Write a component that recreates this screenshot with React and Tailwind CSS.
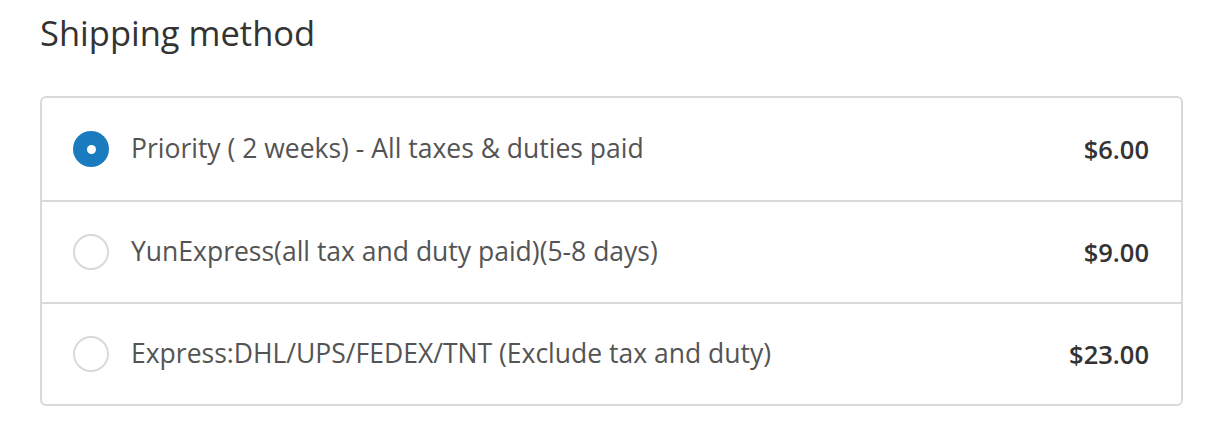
export default function App() {
  const options = [
    { label: 'Priority ( 2 weeks) - All taxes & duties paid', price: '$6.00', checked: true },
    { label: 'YunExpress(all tax and duty paid)(5-8 days)', price: '$9.00', checked: false },
    { label: 'Express:DHL/UPS/FEDEX/TNT (Exclude tax and duty)', price: '$23.00', checked: false },
  ];

  return (
    <div className="min-h-screen bg-white px-[40px] pt-[10px]" style={{ fontFamily: '"Open Sans", "Noto Sans", sans-serif' }}>
      <h2 className="text-[34.5px] leading-[46px] text-[#333333]">Shipping method</h2>
      <div className="mt-[40px] w-[1143px] rounded-[6px] border-2 border-[#d9d9d9]">
        {options.map((o, i) => (
          <div
            key={i}
            className={
              'flex h-[102px] items-center pl-[31px] pr-[32px] ' + (i > 0 ? 'border-t-2 border-[#d9d9d9]' : '')
            }
          >
            {o.checked ? (
              <span className="flex h-[36px] w-[36px] shrink-0 items-center justify-center rounded-full bg-[#1a7bbf]">
                <span className="h-[9px] w-[9px] rounded-full bg-white" />
              </span>
            ) : (
              <span className="h-[36px] w-[36px] shrink-0 rounded-full border-2 border-[#d9d9d9]" />
            )}
            <span className="ml-[22px] flex-1 text-[26.5px] text-[#545454]">{o.label}</span>
            <span className="text-[25.5px] font-semibold text-[#333333]">{o.price}</span>
          </div>
        ))}
      </div>
    </div>
  );
}
